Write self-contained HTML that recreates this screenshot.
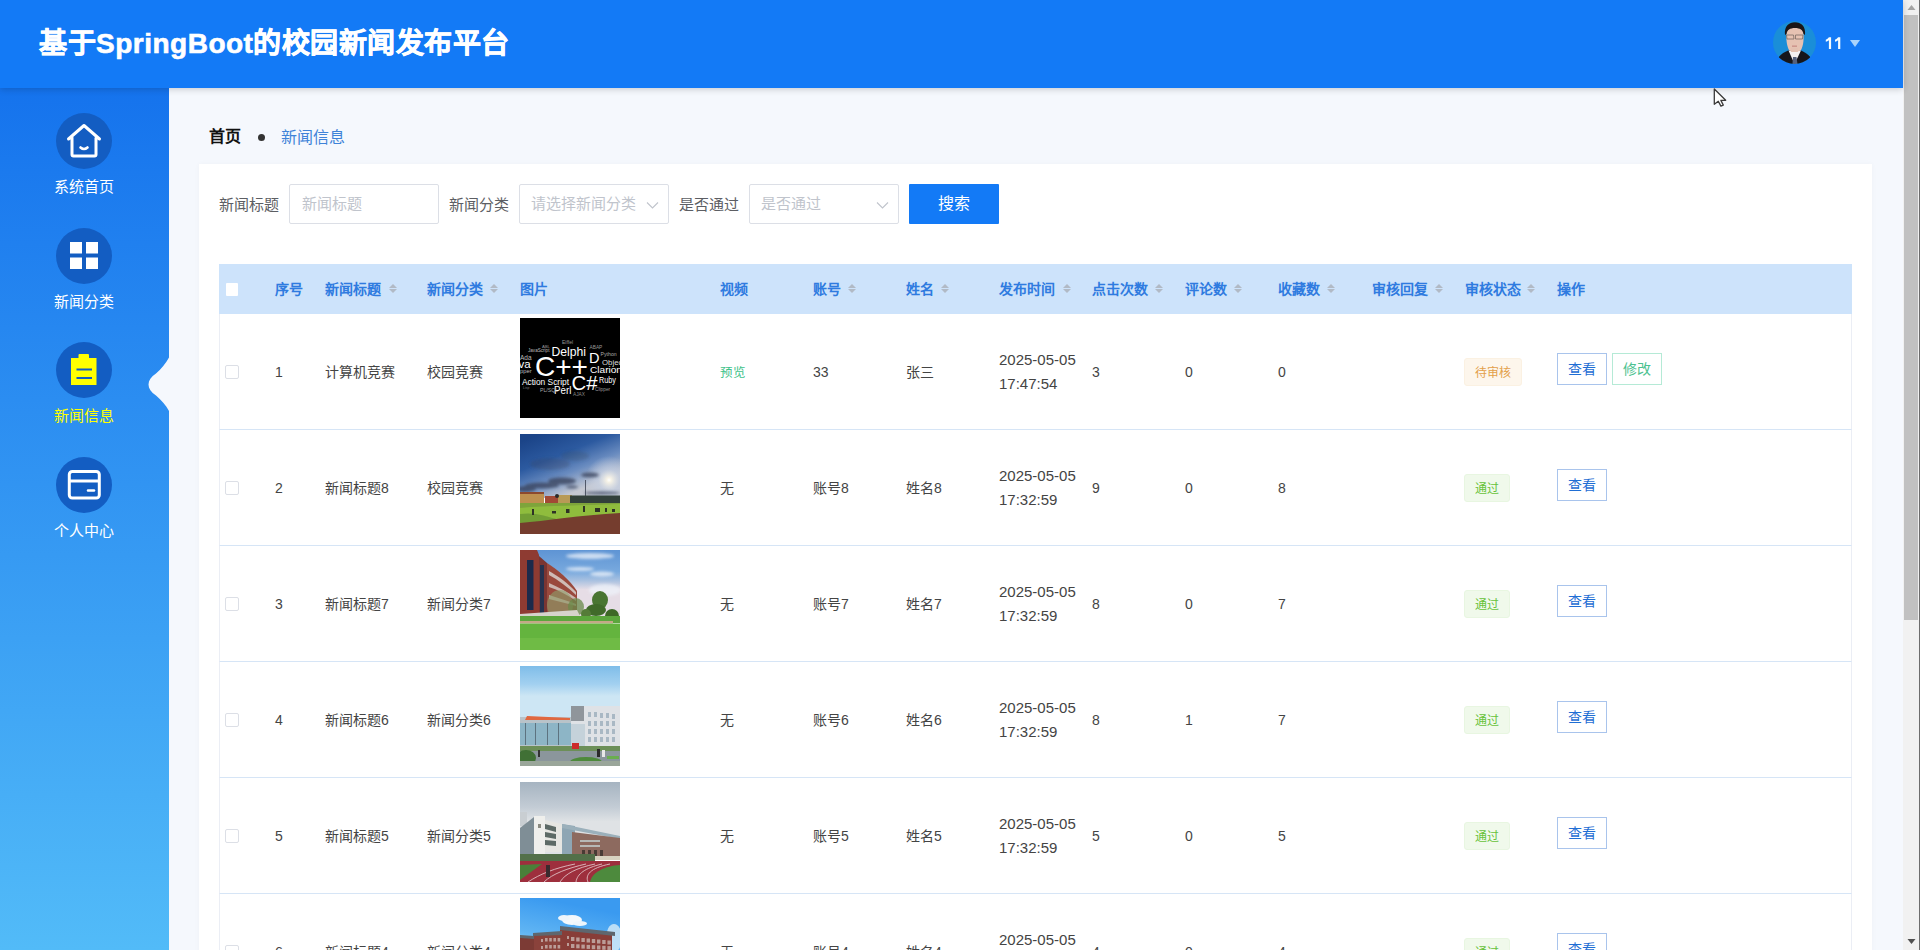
<!DOCTYPE html><html lang="zh-CN"><head><meta charset="utf-8"><style>
*{margin:0;padding:0;box-sizing:border-box}
html,body{width:1920px;height:950px;overflow:hidden}
body{background:#f5f8fd;font-family:"Liberation Sans",sans-serif;position:relative;color:#333}
.abs{position:absolute}
#hdr{position:absolute;left:0;top:0;width:1903px;height:88px;background:#137af6;z-index:5;box-shadow:0 1px 7px rgba(0,0,0,0.2)}
#title{position:absolute;left:39px;top:23.5px;-webkit-text-stroke:0.6px #fff;font-size:28px;line-height:40px;font-weight:bold;color:#fff;white-space:nowrap;letter-spacing:0.5px}
#avatar{position:absolute;left:1772.5px;top:21px;width:43px;height:43px;border-radius:50%;overflow:hidden}
#uname{position:absolute;left:1825px;top:32px;font-size:17px;line-height:22px;color:#fff}
#caret{position:absolute;left:1850px;top:40px;width:0;height:0;border-left:5px solid transparent;border-right:5px solid transparent;border-top:7px solid #a8d3fc}
#side{position:absolute;left:0;top:88px;width:169px;height:862px;background:linear-gradient(#1573ed,#52bbf8)}
.sitem{position:absolute;left:0;width:169px}
.circ{position:absolute;left:56px;width:56px;height:56px;border-radius:50%;background:#135dc2}
.slabel{position:absolute;left:0;width:168px;text-align:center;font-size:15px;line-height:20px;color:#fff}
#notch{position:absolute;left:140px;top:350px;z-index:2}
#crumb1{position:absolute;left:209px;top:126px;font-size:16px;line-height:22px;font-weight:bold;color:#111}
#crumbdot{position:absolute;left:258px;top:134px;width:7px;height:7px;border-radius:50%;background:#333}
#crumb2{position:absolute;left:281px;top:126.5px;font-size:16px;line-height:22px;color:#3f83d8}
#card{position:absolute;left:199px;top:164px;width:1673px;height:800px;background:#fff;box-shadow:0 0 6px rgba(0,0,0,0.03)}
.lbl{position:absolute;top:194.5px;font-size:15px;line-height:20px;color:#5c5e63}
.inp{position:absolute;top:184px;width:150px;height:40px;border:1px solid #dcdfe6;border-radius:2px;background:#fff}
.ph{position:absolute;top:9px;left:12px;font-size:15px;line-height:20px;color:#c0c4cc;white-space:nowrap}
.arr{position:absolute;top:15.5px;width:13px;height:8px}
#sbtn{position:absolute;left:909px;top:184px;width:90px;height:40px;background:#137af6;color:#fff;font-size:16px;line-height:40px;text-align:center;border-radius:1px}
#thead{position:absolute;left:219px;top:264px;width:1633px;height:50px;background:#cde3fb}
.th{position:absolute;top:279px;font-size:14px;line-height:20px;font-weight:bold;color:#2f7be0;white-space:nowrap}
.sort{position:absolute;width:8px;height:12px}
.sort .up{position:absolute;left:0;top:0.5px;border-left:4px solid transparent;border-right:4px solid transparent;border-bottom:4px solid #b1bac6}
.sort .dn{position:absolute;left:0;top:5.5px;border-left:4px solid transparent;border-right:4px solid transparent;border-top:4px solid #b1bac6}
#hcb{position:absolute;left:226px;top:283px;width:12px;height:12.5px;background:#fff;border-radius:1px}
.row{position:absolute;left:219px;width:1633px;height:116px;border-bottom:1px solid #d6e5f6;border-left:1px solid #ebeef5;border-right:1px solid #ebeef5}
.cb{position:absolute;width:14px;height:14px;border:1px solid #dcdfe6;border-radius:2px;background:#fff}
.cell{position:absolute;font-size:14px;line-height:20px;color:#444;white-space:nowrap}
.cell.green{color:#3ec28a;font-size:12.5px;margin-top:1px}
.date{line-height:24px;font-size:15px}
.img{position:absolute;width:100px;height:100px;overflow:hidden}
.img svg{display:block}
.tag{position:absolute;left:1464px;height:28px;line-height:28px;padding:0 10px;font-size:12px;border:1px solid;border-radius:3px;white-space:nowrap}
.pend{background:#fdf6ec;border-color:#fbf1e2;color:#e3a04a}
.okk{background:#f0f9eb;border-color:#e8f6e1;color:#67c23a}
.btn{position:absolute;width:50px;height:32px;line-height:30px;text-align:center;font-size:14px;border:1px solid;background:#fff;border-radius:0}
.view{border-color:#a9c4ec;color:#1f6ed4}
.edit{border-color:#b5ead6;color:#4cc290}
#sb{position:absolute;left:1903px;top:0;width:17px;height:950px;background:#f1f1f1}
#sbthumb{position:absolute;left:1904px;top:15px;width:13.5px;height:605px;background:#c1c1c1}
#sbline{position:absolute;left:1919px;top:0;width:1px;height:950px;background:#6d6d6d}
</style></head><body>
<div id="crumb1">首页</div><div id="crumbdot"></div><div id="crumb2">新闻信息</div>
<div id="card"></div>
<div class="lbl" style="left:219px">新闻标题</div>
<div class="inp" style="left:289px"><div class="ph">新闻标题</div></div>
<div class="lbl" style="left:449px">新闻分类</div>
<div class="inp" style="left:519px"><div class="ph" style="left:10.5px">请选择新闻分类</div><svg class="arr" style="left:126px" viewBox="0 0 13 8"><polyline points="1,1.5 6.5,7 12,1.5" fill="none" stroke="#c0c4cc" stroke-width="1.1"/></svg></div>
<div class="lbl" style="left:679px">是否通过</div>
<div class="inp" style="left:749px"><div class="ph" style="left:10.5px">是否通过</div><svg class="arr" style="left:126px" viewBox="0 0 13 8"><polyline points="1,1.5 6.5,7 12,1.5" fill="none" stroke="#c0c4cc" stroke-width="1.1"/></svg></div>
<div id="sbtn">搜索</div>
<div id="thead"></div><div id="hcb"></div>
<div class="th" style="left:275px">序号</div>
<div class="th" style="left:325px">新闻标题</div>
<div class="sort" style="left:389px;top:283px"><i class="up"></i><i class="dn"></i></div>
<div class="th" style="left:427px">新闻分类</div>
<div class="sort" style="left:490px;top:283px"><i class="up"></i><i class="dn"></i></div>
<div class="th" style="left:520px">图片</div>
<div class="th" style="left:720px">视频</div>
<div class="th" style="left:813px">账号</div>
<div class="sort" style="left:848px;top:283px"><i class="up"></i><i class="dn"></i></div>
<div class="th" style="left:906px">姓名</div>
<div class="sort" style="left:941px;top:283px"><i class="up"></i><i class="dn"></i></div>
<div class="th" style="left:999px">发布时间</div>
<div class="sort" style="left:1063px;top:283px"><i class="up"></i><i class="dn"></i></div>
<div class="th" style="left:1092px">点击次数</div>
<div class="sort" style="left:1155px;top:283px"><i class="up"></i><i class="dn"></i></div>
<div class="th" style="left:1185px">评论数</div>
<div class="sort" style="left:1234px;top:283px"><i class="up"></i><i class="dn"></i></div>
<div class="th" style="left:1278px">收藏数</div>
<div class="sort" style="left:1327px;top:283px"><i class="up"></i><i class="dn"></i></div>
<div class="th" style="left:1372px">审核回复</div>
<div class="sort" style="left:1435px;top:283px"><i class="up"></i><i class="dn"></i></div>
<div class="th" style="left:1465px">审核状态</div>
<div class="sort" style="left:1527px;top:283px"><i class="up"></i><i class="dn"></i></div>
<div class="th" style="left:1557px">操作</div>
<div class="row" style="top:314px"></div>
<div class="cb" style="left:225px;top:365px"></div>
<div class="cell" style="left:275px;top:362px">1</div>
<div class="cell" style="left:325px;top:362px">计算机竞赛</div>
<div class="cell" style="left:427px;top:362px">校园竞赛</div>
<div class="img" style="left:520px;top:318px"><svg width="100" height="100" viewBox="0 0 100 100"><rect width="100" height="100" fill="#000"/>
<g font-family="Liberation Sans" fill="#fff">
<text x="15" y="58" font-size="27.5" textLength="53" lengthAdjust="spacingAndGlyphs">C++</text>
<text x="51.5" y="71.5" font-size="20.5" textLength="26" lengthAdjust="spacingAndGlyphs">C#</text>
<text x="31.5" y="37.5" font-size="12.5" textLength="34.5" lengthAdjust="spacingAndGlyphs">Delphi</text>
<text x="69" y="44.8" font-size="14.5">D</text>
<text x="70" y="54.8" font-size="9.8" textLength="32" lengthAdjust="spacingAndGlyphs">Clarion</text>
<text x="79" y="64.5" font-size="8.8" textLength="17" lengthAdjust="spacingAndGlyphs">Ruby</text>
<text x="2" y="66.5" font-size="8.5" textLength="47" lengthAdjust="spacingAndGlyphs">Action Script</text>
<text x="34" y="76" font-size="10.5" textLength="17.5" lengthAdjust="spacingAndGlyphs">Perl</text>
<text x="-1.5" y="50" font-size="11.5">va</text>
<text x="82" y="47" font-size="7.8" fill="#ddd">Objec</text>
<text x="0" y="42" font-size="6.5" fill="#bbb">Ada</text>
<text x="0" y="55" font-size="5.8" fill="#bbb">pper</text>
<text x="42" y="26" font-size="5" fill="#999">Eiffel</text>
<text x="80.5" y="37.5" font-size="5.2" fill="#aaa">Python</text>
<text x="69.5" y="31" font-size="4.8" fill="#999">ABAP</text>
<text x="8" y="34" font-size="4.6" fill="#bbb">JavaScript</text>
<text x="22" y="29.5" font-size="4.2" fill="#999">ABL</text>
<text x="53" y="77.5" font-size="4.8" fill="#888">AJAX</text>
<text x="75" y="72.5" font-size="4.8" fill="#999">Clipper</text>
<text x="20" y="74" font-size="5.2" fill="#aaa">PL/SQL</text>
<text x="3" y="70.5" font-size="3.5" fill="#777">Lisp</text>
</g></svg></div>
<div class="cell green" style="left:720px;top:362px">预览</div>
<div class="cell" style="left:813px;top:362px">33</div>
<div class="cell" style="left:906px;top:362px">张三</div>
<div class="cell date" style="left:999px;top:348px">2025-05-05<br>17:47:54</div>
<div class="cell" style="left:1092px;top:362px">3</div>
<div class="cell" style="left:1185px;top:362px">0</div>
<div class="cell" style="left:1278px;top:362px">0</div>
<div class="tag pend" style="top:358px">待审核</div>
<div class="btn view" style="left:1557px;top:353px">查看</div>
<div class="btn edit" style="left:1612px;top:353px">修改</div>
<div class="row" style="top:430px"></div>
<div class="cb" style="left:225px;top:481px"></div>
<div class="cell" style="left:275px;top:478px">2</div>
<div class="cell" style="left:325px;top:478px">新闻标题8</div>
<div class="cell" style="left:427px;top:478px">校园竞赛</div>
<div class="img" style="left:520px;top:434px"><svg width="100" height="100" viewBox="0 0 100 100">
<defs>
<linearGradient id="s2" gradientUnits="userSpaceOnUse" x1="20" y1="0" x2="45" y2="62"><stop offset="0" stop-color="#1b4488"/><stop offset="0.4" stop-color="#2c5aa0"/><stop offset="0.7" stop-color="#6a8cc0"/><stop offset="1" stop-color="#c4c8d2"/></linearGradient>
<radialGradient id="m2" gradientUnits="userSpaceOnUse" cx="89" cy="46" r="24"><stop offset="0" stop-color="#ffffff"/><stop offset="0.1" stop-color="#f6f2e6"/><stop offset="0.45" stop-color="#c8d2e4" stop-opacity="0.65"/><stop offset="1" stop-color="#c8d2e4" stop-opacity="0"/></radialGradient>
<filter id="b2"><feGaussianBlur stdDeviation="1.4"/></filter>
<filter id="b2s"><feGaussianBlur stdDeviation="0.55"/></filter>
</defs>
<rect width="100" height="64" fill="url(#s2)"/>
<rect width="100" height="64" fill="url(#m2)"/>
<g filter="url(#b2)" fill="#3a455e" opacity="0.8">
<ellipse cx="42" cy="47" rx="14" ry="3.5"/>
<ellipse cx="22" cy="51.5" rx="17" ry="3"/>
<ellipse cx="70" cy="41" rx="9" ry="2.5"/>
<ellipse cx="6" cy="55" rx="10" ry="3"/>
<ellipse cx="52" cy="53" rx="6" ry="1.5"/>
<ellipse cx="82" cy="59" rx="18" ry="1.5"/>
<ellipse cx="30" cy="30" rx="20" ry="6" opacity="0.35"/>
<ellipse cx="55" cy="22" rx="14" ry="5" opacity="0.3"/>
</g>
<g filter="url(#b2s)">
<rect x="65" y="46" width="0.8" height="16" fill="#3a3f50"/>
<rect x="0" y="59" width="24" height="11" fill="#be9050"/>
<rect x="0" y="58" width="24" height="2" fill="#8c4a2e"/>
<rect x="25" y="62" width="13" height="8" fill="#a24a34"/>
<rect x="38" y="61" width="14" height="9" fill="#b89a56"/>
<rect x="50" y="61.5" width="50" height="8.5" fill="#33403a"/>
<circle cx="37" cy="62" r="2" fill="#2a2a2a"/>
<rect x="0" y="69" width="100" height="20" fill="#7ea43a"/>
<path d="M0,74 C30,71 60,72 100,70 L100,84 C60,86 30,88 0,90Z" fill="#8fbc3e"/>
<path d="M0,80 C15,78 25,82 40,86 L0,90Z" fill="#5f8a30" opacity="0.6"/>
<g fill="#2e3228"><rect x="12" y="75" width="2" height="6"/><rect x="46" y="75" width="3.5" height="4"/><rect x="63" y="72" width="2" height="6"/><rect x="32" y="77" width="4" height="2.5"/><rect x="75" y="74" width="5" height="4"/><rect x="92" y="75" width="3" height="3"/><rect x="85" y="74" width="2" height="4"/></g>
<path d="M0,89 C25,87 60,81 100,79 L100,100 L0,100Z" fill="#743e2e"/>
</g>
</svg></div>
<div class="cell" style="left:720px;top:478px">无</div>
<div class="cell" style="left:813px;top:478px">账号8</div>
<div class="cell" style="left:906px;top:478px">姓名8</div>
<div class="cell date" style="left:999px;top:464px">2025-05-05<br>17:32:59</div>
<div class="cell" style="left:1092px;top:478px">9</div>
<div class="cell" style="left:1185px;top:478px">0</div>
<div class="cell" style="left:1278px;top:478px">8</div>
<div class="tag okk" style="top:474px">通过</div>
<div class="btn view" style="left:1557px;top:469px">查看</div>
<div class="row" style="top:546px"></div>
<div class="cb" style="left:225px;top:597px"></div>
<div class="cell" style="left:275px;top:594px">3</div>
<div class="cell" style="left:325px;top:594px">新闻标题7</div>
<div class="cell" style="left:427px;top:594px">新闻分类7</div>
<div class="img" style="left:520px;top:550px"><svg width="100" height="100" viewBox="0 0 100 100">
<defs>
<linearGradient id="s3" x1="0" y1="0" x2="0" y2="1"><stop offset="0" stop-color="#5e94d4"/><stop offset="0.3" stop-color="#78a9de"/><stop offset="0.42" stop-color="#a7c0e0"/><stop offset="0.55" stop-color="#e6dde6"/></linearGradient>
<filter id="b3"><feGaussianBlur stdDeviation="0.7"/></filter>
<filter id="b3b"><feGaussianBlur stdDeviation="1.5"/></filter>
</defs>
<rect width="100" height="72" fill="url(#s3)"/>
<g filter="url(#b3b)" fill="#eef3fa" opacity="0.75"><ellipse cx="70" cy="6" rx="24" ry="3"/><ellipse cx="60" cy="19" rx="14" ry="2"/><ellipse cx="82" cy="24" rx="12" ry="2.5"/><ellipse cx="85" cy="40" rx="16" ry="6"/></g>
<g filter="url(#b3)">
<path d="M0,0 L17,0 L19,5 L19,66 L0,67Z" fill="#8e3a32"/>
<path d="M19,6 L27,13 L27,65 L19,66Z" fill="#7a3530"/>
<path d="M27,13 C38,20 50,30 57,41 L57,61 L27,65Z" fill="#9a4a3e"/>
<path d="M7,10 L13.5,10 L13.5,60 L7,60Z" fill="#1f2b4c"/>
<path d="M20,15 L24,15 L24,63 L20,63Z" fill="#263050"/>
<path d="M29,21 C38,26 48,33 56,42 L56,45 C48,37 38,30 29,25Z" fill="#d8d0cc" opacity="0.85"/>
<path d="M29,33 C38,37 48,42 56,48 L56,51 C48,45 38,40 29,37Z" fill="#d8d0cc" opacity="0.8"/>
<path d="M29,45 C38,48 48,51 56,54 L56,56 C48,54 38,51 29,49Z" fill="#d8d0cc" opacity="0.7"/>
<ellipse cx="40" cy="55" rx="13" ry="15" fill="#8ea06a" opacity="0.6"/>
<ellipse cx="56" cy="57" rx="8" ry="9" fill="#6a8a4a" opacity="0.75"/>
<ellipse cx="80" cy="50" rx="8" ry="9" fill="#4a7432"/>
<ellipse cx="76" cy="60" rx="10" ry="6" fill="#3f6a2c"/>
<ellipse cx="92" cy="66" rx="7" ry="7" fill="#3c6828"/>
<ellipse cx="66" cy="64" rx="5" ry="5" fill="#557c38"/>
<path d="M0,64 L57,60 L60,66 L0,71Z" fill="#d6d3cc"/>
</g>
<rect x="0" y="66" width="100" height="7" fill="#5ba63c" filter="url(#b3)"/>
<rect x="0" y="71" width="93" height="2.5" fill="#c4a886" filter="url(#b3)"/>
<rect x="0" y="73.5" width="100" height="26.5" fill="#64b43e"/>
<rect x="0" y="88" width="100" height="12" fill="#74be48" opacity="0.7"/>
</svg></div>
<div class="cell" style="left:720px;top:594px">无</div>
<div class="cell" style="left:813px;top:594px">账号7</div>
<div class="cell" style="left:906px;top:594px">姓名7</div>
<div class="cell date" style="left:999px;top:580px">2025-05-05<br>17:32:59</div>
<div class="cell" style="left:1092px;top:594px">8</div>
<div class="cell" style="left:1185px;top:594px">0</div>
<div class="cell" style="left:1278px;top:594px">7</div>
<div class="tag okk" style="top:590px">通过</div>
<div class="btn view" style="left:1557px;top:585px">查看</div>
<div class="row" style="top:662px"></div>
<div class="cb" style="left:225px;top:713px"></div>
<div class="cell" style="left:275px;top:710px">4</div>
<div class="cell" style="left:325px;top:710px">新闻标题6</div>
<div class="cell" style="left:427px;top:710px">新闻分类6</div>
<div class="img" style="left:520px;top:666px"><svg width="100" height="100" viewBox="0 0 100 100">
<defs>
<linearGradient id="s4" x1="0" y1="0" x2="0" y2="1"><stop offset="0" stop-color="#7fbde9"/><stop offset="0.3" stop-color="#a2d0f0"/><stop offset="0.5" stop-color="#cde6f4"/></linearGradient>
<filter id="b4"><feGaussianBlur stdDeviation="0.6"/></filter>
</defs>
<rect width="100" height="60" fill="url(#s4)"/>
<g filter="url(#b4)">
<rect x="0" y="51" width="52" height="32" fill="#b9c3c9"/>
<path d="M7,50 L50,52 L50,54 L5,54Z" fill="#e06840"/>
<rect x="0" y="57" width="52" height="22" fill="#8db5c6"/>
<g fill="#5d7380"><rect x="5" y="57" width="1" height="22"/><rect x="15" y="57" width="1" height="22"/><rect x="27" y="57" width="1" height="22"/><rect x="38" y="57" width="1" height="22"/></g>
<rect x="51" y="40" width="49" height="45" fill="#dfe2e6"/>
<rect x="51" y="40" width="13" height="15" fill="#8f959b"/>
<g fill="#a9b8c4"><rect x="68" y="46" width="3" height="5"/><rect x="74" y="46" width="3" height="5"/><rect x="80" y="47" width="3" height="5"/><rect x="86" y="47" width="3" height="5"/><rect x="92" y="48" width="3" height="5"/>
<rect x="68" y="55" width="3" height="5"/><rect x="74" y="55" width="3" height="5"/><rect x="80" y="55" width="3" height="5"/><rect x="86" y="55" width="3" height="5"/><rect x="92" y="55" width="3" height="5"/>
<rect x="68" y="63" width="3" height="5"/><rect x="74" y="63" width="3" height="5"/><rect x="80" y="63" width="3" height="5"/><rect x="86" y="63" width="3" height="5"/><rect x="92" y="63" width="3" height="5"/>
<rect x="68" y="71" width="3" height="5"/><rect x="74" y="71" width="3" height="5"/><rect x="80" y="71" width="3" height="5"/><rect x="86" y="71" width="3" height="5"/><rect x="92" y="71" width="3" height="5"/></g>
<rect x="51" y="58" width="14" height="25" fill="#c5d2da"/>
<rect x="0" y="80" width="100" height="6" fill="#6c8f58"/>
<rect x="0" y="85" width="100" height="10" fill="#8b969c"/>
<rect x="52" y="77" width="7" height="6" fill="#cc2a2a"/>
<ellipse cx="6" cy="92" rx="10" ry="8" fill="#3f6f34"/>
<ellipse cx="66" cy="96" rx="16" ry="5" fill="#4e8a3a"/>
<rect x="0" y="95" width="100" height="5" fill="#9aa69a"/>
<rect x="87" y="90" width="12" height="3" fill="#6aae50"/>
<rect x="77" y="83" width="3" height="8" fill="#2a2a2a"/><rect x="82" y="84" width="3" height="7" fill="#e8e8e8"/><rect x="18" y="84" width="2" height="7" fill="#333"/>
</g>
</svg></div>
<div class="cell" style="left:720px;top:710px">无</div>
<div class="cell" style="left:813px;top:710px">账号6</div>
<div class="cell" style="left:906px;top:710px">姓名6</div>
<div class="cell date" style="left:999px;top:696px">2025-05-05<br>17:32:59</div>
<div class="cell" style="left:1092px;top:710px">8</div>
<div class="cell" style="left:1185px;top:710px">1</div>
<div class="cell" style="left:1278px;top:710px">7</div>
<div class="tag okk" style="top:706px">通过</div>
<div class="btn view" style="left:1557px;top:701px">查看</div>
<div class="row" style="top:778px"></div>
<div class="cb" style="left:225px;top:829px"></div>
<div class="cell" style="left:275px;top:826px">5</div>
<div class="cell" style="left:325px;top:826px">新闻标题5</div>
<div class="cell" style="left:427px;top:826px">新闻分类5</div>
<div class="img" style="left:520px;top:782px"><svg width="100" height="100" viewBox="0 0 100 100">
<defs>
<linearGradient id="s5" x1="0" y1="0" x2="0" y2="1"><stop offset="0" stop-color="#a6b4c1"/><stop offset="0.35" stop-color="#c3ccd5"/><stop offset="0.55" stop-color="#dfe2e5"/></linearGradient>
<filter id="b5"><feGaussianBlur stdDeviation="0.6"/></filter>
</defs>
<rect width="100" height="72" fill="url(#s5)"/>
<g filter="url(#b5)">
<rect x="0" y="30" width="7" height="14" fill="#c9ced2"/>
<path d="M0,46 L14,35 L14,72 L0,72Z" fill="#7f8e96"/>
<path d="M14,34 L25,34 L25,72 L14,72Z" fill="#efefec"/>
<path d="M25,38 L42,42 L42,70 L25,70Z" fill="#e6e6e2"/>
<g fill="#5d6a66"><path d="M25,42 L36,45 L36,50 L25,47Z"/><path d="M25,50 L36,52 L36,57 L25,55Z"/><path d="M25,58 L36,59 L36,64 L25,63Z"/></g>
<rect x="18" y="42" width="3" height="4" fill="#8a8a80"/>
<path d="M42,42 L55,44 L55,72 L42,72Z" fill="#8ea6b4"/>
<path d="M42,42 L100,54 L100,57 L42,46Z" fill="#9bb0bb"/>
<path d="M52,50 L100,56 L100,76 L52,76Z" fill="#8d6a5e"/>
<g fill="#b7b9b6"><rect x="60" y="58" width="20" height="2"/><rect x="60" y="63" width="20" height="2"/></g>
<g fill="#4a3a36"><rect x="62" y="68" width="3" height="7"/><rect x="68" y="68" width="3" height="7"/><rect x="74" y="68" width="3" height="7"/><rect x="80" y="68" width="3" height="7"/></g>
<rect x="72" y="74" width="28" height="4" fill="#d8d2c0"/>
<rect x="0" y="72" width="75" height="8" fill="#52704a"/>
</g>
<rect x="0" y="79" width="100" height="21" fill="#9e2f3d"/>
<path d="M70,100 C72,90 85,84 100,83 L100,100Z" fill="#4d8a3d"/>
<path d="M0,83 L22,82 L0,98Z" fill="#4a8039"/>
<g stroke="#e6cfd2" stroke-width="0.9" fill="none" opacity="0.9">
<path d="M8,100 C20,92 35,86 55,82"/><path d="M24,100 C32,92 48,86 66,82"/><path d="M40,100 C45,92 56,86 75,82"/><path d="M56,100 C57,92 65,86 82,82"/><path d="M68,100 C65,93 70,86 90,82"/></g>
<rect x="26" y="83" width="4" height="12" fill="#3a2a2e"/>
</svg></div>
<div class="cell" style="left:720px;top:826px">无</div>
<div class="cell" style="left:813px;top:826px">账号5</div>
<div class="cell" style="left:906px;top:826px">姓名5</div>
<div class="cell date" style="left:999px;top:812px">2025-05-05<br>17:32:59</div>
<div class="cell" style="left:1092px;top:826px">5</div>
<div class="cell" style="left:1185px;top:826px">0</div>
<div class="cell" style="left:1278px;top:826px">5</div>
<div class="tag okk" style="top:822px">通过</div>
<div class="btn view" style="left:1557px;top:817px">查看</div>
<div class="row" style="top:894px"></div>
<div class="cb" style="left:225px;top:945px"></div>
<div class="cell" style="left:275px;top:942px">6</div>
<div class="cell" style="left:325px;top:942px">新闻标题4</div>
<div class="cell" style="left:427px;top:942px">新闻分类4</div>
<div class="img" style="left:520px;top:898px"><svg width="100" height="100" viewBox="0 0 100 100">
<defs>
<linearGradient id="s6" x1="0.2" y1="0" x2="0" y2="1"><stop offset="0" stop-color="#3a9af0"/><stop offset="0.35" stop-color="#5fb4f3"/><stop offset="0.55" stop-color="#90d0f6"/></linearGradient>
<filter id="b6"><feGaussianBlur stdDeviation="0.7"/></filter>
</defs>
<rect width="100" height="100" fill="url(#s6)"/>
<g filter="url(#b6)">
<ellipse cx="52" cy="22" rx="10" ry="5" fill="#f4f8fb"/><ellipse cx="44" cy="20" rx="6" ry="3" fill="#eef5fb"/><ellipse cx="60" cy="25.5" rx="7" ry="2.5" fill="#eef5fb"/>
<ellipse cx="94" cy="40" rx="8" ry="14" fill="#d8ecf8" opacity="0.8"/>
<path d="M0,39 L14,40 L14,100 L0,100Z" fill="#7c3a34"/>
<path d="M14,36 L40,35 L40,100 L14,100Z" fill="#8a423a"/>
<path d="M40,30 L92,36 L92,100 L40,100Z" fill="#883e37"/>
<path d="M0,37 L14,38 L14,41 L0,40Z M13,35 L42,33 L42,37 L13,38Z M40,28 L95,34 L95,38 L40,32Z" fill="#5e666e"/>
<g fill="#cdbcb8" opacity="0.75"><rect x="47" y="38" width="2" height="3"/><rect x="47" y="45" width="2" height="3"/><rect x="21" y="41" width="2" height="3"/><rect x="21" y="48" width="2" height="3"/><rect x="51.0" y="39.0" width="3.4" height="4"/><rect x="51.0" y="46.0" width="3.4" height="4"/><rect x="56.2" y="39.5" width="3.4" height="4"/><rect x="56.2" y="46.3" width="3.4" height="4"/><rect x="61.4" y="40.0" width="3.4" height="4"/><rect x="61.4" y="46.6" width="3.4" height="4"/><rect x="66.6" y="40.5" width="3.4" height="4"/><rect x="66.6" y="46.9" width="3.4" height="4"/><rect x="71.8" y="41.0" width="3.4" height="4"/><rect x="71.8" y="47.2" width="3.4" height="4"/><rect x="77.0" y="41.5" width="3.4" height="4"/><rect x="77.0" y="47.5" width="3.4" height="4"/><rect x="82.2" y="42.0" width="3.4" height="4"/><rect x="82.2" y="47.8" width="3.4" height="4"/><rect x="87.4" y="42.5" width="3.4" height="4"/><rect x="87.4" y="48.1" width="3.4" height="4"/><rect x="25.0" y="40" width="2.6" height="3.5"/><rect x="25.0" y="47" width="2.6" height="3.5"/><rect x="29.2" y="40" width="2.6" height="3.5"/><rect x="29.2" y="47" width="2.6" height="3.5"/><rect x="33.4" y="40" width="2.6" height="3.5"/><rect x="33.4" y="47" width="2.6" height="3.5"/><rect x="37.6" y="40" width="2.6" height="3.5"/><rect x="37.6" y="47" width="2.6" height="3.5"/></g>
<ellipse cx="96" cy="70" rx="10" ry="8" fill="#6fa04a"/>
</g>
</svg></div>
<div class="cell" style="left:720px;top:942px">无</div>
<div class="cell" style="left:813px;top:942px">账号4</div>
<div class="cell" style="left:906px;top:942px">姓名4</div>
<div class="cell date" style="left:999px;top:928px">2025-05-05<br>17:32:59</div>
<div class="cell" style="left:1092px;top:942px">4</div>
<div class="cell" style="left:1185px;top:942px">0</div>
<div class="cell" style="left:1278px;top:942px">4</div>
<div class="tag okk" style="top:938px">通过</div>
<div class="btn view" style="left:1557px;top:933px">查看</div>
<div id="side">
<div class="circ" style="top:25px"><svg width="56" height="56" viewBox="0 0 56 56"><path d="M12.5,26 L28,12.5 L43.5,26 M16,24.5 L16,41.5 Q16,43 17.5,43 L38.5,43 Q40,43 40,41.5 L40,25" fill="none" stroke="#fff" stroke-width="3" stroke-linejoin="round" stroke-linecap="round"/><path d="M24.5,34.5 Q28,37.5 31.5,34.5" fill="none" stroke="#fff" stroke-width="2.6" stroke-linecap="round"/></svg></div>
<div class="slabel" style="top:89px;color:#fff">系统首页</div>
<div class="circ" style="top:140px"><svg width="56" height="56" viewBox="0 0 56 56"><rect x="14" y="14" width="12" height="11.5" fill="#fff"/><rect x="30" y="14" width="12" height="11.5" fill="#fff"/><rect x="14" y="29.5" width="12" height="11.5" fill="#fff"/><rect x="30" y="29.5" width="12" height="11.5" fill="#fff"/></svg></div>
<div class="slabel" style="top:204px;color:#fff">新闻分类</div>
<div class="circ" style="top:254px"><svg width="56" height="56" viewBox="0 0 56 56"><rect x="15" y="16" width="25.5" height="27" fill="#ffff00"/><rect x="22.5" y="12" width="10.5" height="5" rx="1" fill="#ffff00"/><rect x="20.5" y="26.5" width="15.5" height="2" fill="#135dc2"/><rect x="20.5" y="35" width="15.5" height="2" fill="#135dc2"/></svg></div>
<div class="slabel" style="top:318px;color:#ffff00">新闻信息</div>
<div class="circ" style="top:369px"><svg width="56" height="56" viewBox="0 0 56 56"><rect x="13.3" y="14.5" width="30" height="26.5" rx="3" fill="none" stroke="#fff" stroke-width="3"/><line x1="13" y1="24" x2="43" y2="24" stroke="#fff" stroke-width="3"/><line x1="32" y1="33.5" x2="38" y2="33.5" stroke="#fff" stroke-width="2.5" stroke-linecap="round"/></svg></div>
<div class="slabel" style="top:433px;color:#fff">个人中心</div>
</div>
<svg id="notch" width="30" height="70" viewBox="140 350 30 70"><path d="M170,357.5 L169,357.5 C166,363 161,369 156,373.5 C146,380 146,389 156,395.5 C161,400 166,405 169,411 L170,411 Z" fill="#f5f8fd"/></svg>
<div id="hdr"><div id="title">基于SpringBoot的校园新闻发布平台</div>
<div id="avatar"><svg width="43" height="43" viewBox="0 0 43 43"><rect width="43" height="43" fill="#1a8ed8"/><defs><filter id="avb"><feGaussianBlur stdDeviation="0.45"/></filter></defs><g filter="url(#avb)"><path d="M2,43 C5,35 10,31 17,29 L26,29 C33,31 38,35 41,43Z" fill="#17171d"/><path d="M15.5,29.5 L21.5,43 L28,29.5Z" fill="#f4f0f0"/><path d="M20,36 L23.5,36 L24.5,43 L19.5,43Z" fill="#56607a"/><path d="M13.5,12 C13,20 14,25 16,29 C18,31 26,31 28,29 C30,25 31,20 30.5,12 C30,8 27,6 22,6 C17,6 14,8 13.5,12Z" fill="#e6c2b2"/><rect x="18" y="27" width="7" height="4" fill="#e3c0b0"/><path d="M12,14 C11,5 16,1.2 22,1.2 C28,1.2 33,5 32,14 L30.5,13 C30,9 27,7 22,7 C17,7 14,9 13.5,13 Z" fill="#1b1817"/><path d="M13.5,14 L20.5,14 L21,18 L14,18Z M22.5,14 L30,14 L29.5,18 L22.5,18Z" fill="none" stroke="#7a6a62" stroke-width="0.8"/><rect x="19" y="24.5" width="5" height="1.3" fill="#c98e86"/></g></svg></div>
<svg style="position:absolute;left:1824px;top:36px" width="20" height="14" viewBox="0 0 20 14"><path d="M4.9,1.2 L7.1,1.2 L7.1,13 L4.9,13 L4.9,4.2 C4,4.9 2.9,5.4 1.8,5.7 L1.8,3.7 C3,3.3 4.1,2.4 4.9,1.2Z M14.1,1.2 L16.3,1.2 L16.3,13 L14.1,13 L14.1,4.2 C13.2,4.9 12.1,5.4 11,5.7 L11,3.7 C12.2,3.3 13.3,2.4 14.1,1.2Z" fill="#f4fbff"/></svg><div id="caret"></div></div>
<div id="sb"></div><div id="sbthumb"></div><div id="sbline"></div>
<svg class="abs" style="left:1903px;top:0" width="17" height="17"><path d="M4.5,10 L8.5,5 L12.5,10Z" fill="#a3a3a3"/></svg>
<svg class="abs" style="left:1903px;top:933px" width="17" height="17"><path d="M4.5,6 L8.5,11 L12.5,6Z" fill="#505050"/></svg>
<svg class="abs" style="left:1710px;top:86px;z-index:10" width="20" height="24" viewBox="1710 86 20 24"><path d="M1714.3,89 L1714.3,104.3 L1718.3,101.3 L1720.9,106.1 L1723.3,105.1 L1720.9,100.4 L1725.7,100.3 Z" fill="#fff" stroke="#3a3a3a" stroke-width="1.3" stroke-linejoin="round"/></svg>
</body></html>
